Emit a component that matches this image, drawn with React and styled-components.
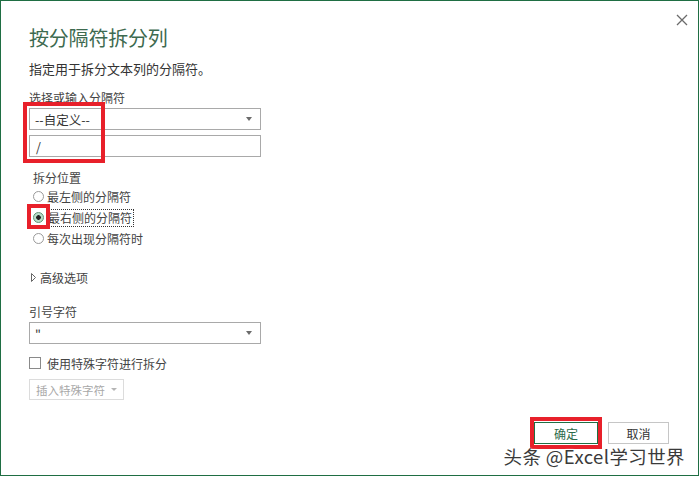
import styled, { createGlobalStyle } from "styled-components";

const Global = createGlobalStyle`
html, body {
    margin: 0;
    padding: 0;
    background: #ffffff;
}
body {
    font-family: "Noto Sans CJK SC", "Noto Sans", sans-serif;
    color: #444444;
}
`

export default function App() {
    return (
        <>
            <Global />
            <Janela>
                <Fechar>
                    <svg width="12" height="12" viewBox="0 0 12 12">
                        <path d="M1 1 L11 11 M11 1 L1 11" stroke="#6b6b6b" strokeWidth="1.3" />
                    </svg>
                </Fechar>
                <Titulo>按分隔符拆分列</Titulo>
                <Subtitulo>指定用于拆分文本列的分隔符。</Subtitulo>
                <Rotulo top={13}>选择或输入分隔符</Rotulo>
                <Marcado>
                    <Caixa>
                        <span>--自定义--</span>
                        <Seta />
                    </Caixa>
                    <Entrada>/</Entrada>
                    <Destaque style={{ left: -6, top: -6, width: 82, height: 61 }} />
                </Marcado>
                <Grupo>
                    <Rotulo top={13}>拆分位置</Rotulo>
                    <Opcao>
                        <Radio />
                        <span>最左侧的分隔符</span>
                    </Opcao>
                    <Opcao>
                        <Radio checked />
                        <Foco>最右侧的分隔符</Foco>
                        <Destaque style={{ left: -6, top: -3, width: 23, height: 25 }} />
                    </Opcao>
                    <Opcao>
                        <Radio />
                        <span>每次出现分隔符时</span>
                    </Opcao>
                </Grupo>
                <Avancado>
                    <svg width="5" height="9" viewBox="0 0 5 9">
                        <path d="M0.5 0.5 L4.5 4.5 L0.5 8.5 Z" fill="none" stroke="#666" strokeWidth="1" />
                    </svg>
                    <span>高级选项</span>
                </Avancado>
                <Rotulo top={19}>引号字符</Rotulo>
                <Caixa top={2}>
                    <span>"</span>
                    <Seta />
                </Caixa>
                <Checagem>
                    <Quadrado />
                    <span>使用特殊字符进行拆分</span>
                </Checagem>
                <Inserir>
                    插入特殊字符
                    <SetaPequena />
                </Inserir>
                <Rodape>
                    <Botao primario>
                        确定
                        <Destaque style={{ left: -5, top: -6, width: 72, height: 32 }} />
                    </Botao>
                    <Botao>取消</Botao>
                </Rodape>
                <Marca>头条 @Excel学习世界</Marca>
            </Janela>
        </>
    );
}

const Janela = styled.div`
position: relative;
width: 699px;
height: 476px;
box-sizing: border-box;
border: 1px solid #1f6e43;
padding: 25px 0 0 28px;
display: flex;
flex-direction: column;
align-items: flex-start;
`
const Fechar = styled.div`
position: absolute;
top: 6px;
right: 10px;
width: 12px;
height: 12px;
`
const Titulo = styled.div`
font-size: 20px;
line-height: 24px;
color: #3d6a4f;
letter-spacing: -0.2px;
`
const Subtitulo = styled.div`
margin-top: 11px;
font-size: 13px;
line-height: 16px;
color: #333333;
`
const Rotulo = styled.div`
margin-top: ${props => props.top}px;
font-size: 12px;
line-height: 16px;
color: #444444;
`
const Marcado = styled.div`
position: relative;
margin-top: 2px;
display: flex;
flex-direction: column;
gap: 5px;
`
const Caixa = styled.div`
width: 232px;
height: 22px;
margin-top: ${props => props.top || 0}px;
box-sizing: border-box;
border: 1px solid #a9a9a9;
padding: 0 8px 0 5px;
display: flex;
align-items: center;
justify-content: space-between;
font-size: 12.5px;
color: #333333;
background: #ffffff;
`
const Entrada = styled.div`
width: 232px;
height: 22px;
box-sizing: border-box;
border: 1px solid #a9a9a9;
padding: 0 6px;
display: flex;
align-items: center;
font-size: 12.5px;
color: #333333;
`
const Seta = styled.span`
width: 0;
height: 0;
border-left: 3.5px solid transparent;
border-right: 3.5px solid transparent;
border-top: 4px solid #6b6b6b;
`
const Destaque = styled.div`
position: absolute;
box-sizing: border-box;
border: 4px solid #e8202a;
pointer-events: none;
`
const Grupo = styled.div`
padding-left: 4px;
display: flex;
flex-direction: column;
`
const Opcao = styled.div`
position: relative;
height: 21px;
display: flex;
align-items: center;
gap: 3px;
font-size: 12px;
color: #444444;
`
const Radio = styled.span`
width: 11px;
height: 11px;
box-sizing: border-box;
border-radius: 50%;
border: 1px solid ${props => props.checked ? "#5f8f74" : "#9a9a9a"};
background: ${props => props.checked ? "radial-gradient(circle, #222 0 2px, #b8dcc8 2.6px)" : "#ffffff"};
`
const Foco = styled.span`
outline: 1px dotted #333333;
padding: 0 1px;
line-height: 16px;
`
const Avancado = styled.div`
margin-top: 20px;
margin-left: 2px;
height: 16px;
display: flex;
align-items: center;
gap: 4px;
font-size: 12px;
color: #444444;
`
const Checagem = styled.div`
margin-top: 11px;
height: 16px;
display: flex;
align-items: center;
gap: 6px;
font-size: 12px;
color: #444444;
`
const Quadrado = styled.span`
width: 12px;
height: 12px;
box-sizing: border-box;
border: 1px solid #8a8a8a;
background: #ffffff;
`
const Inserir = styled.div`
margin-top: 8px;
width: 95px;
height: 21px;
box-sizing: border-box;
border: 1px solid #dcdcdc;
display: flex;
align-items: center;
justify-content: center;
gap: 6px;
font-size: 11.5px;
color: #a8a8a8;
`
const SetaPequena = styled.span`
width: 0;
height: 0;
border-left: 3px solid transparent;
border-right: 3px solid transparent;
border-top: 3px solid #b5b5b5;
`
const Rodape = styled.div`
margin-top: auto;
align-self: stretch;
padding: 0 29px 31px 0;
display: flex;
justify-content: flex-end;
gap: 10px;
`
const Botao = styled.div`
position: relative;
width: ${props => props.primario ? 64 : 61}px;
height: 22px;
box-sizing: border-box;
border: 1px solid ${props => props.primario ? "#1f6e43" : "#c6c6c6"};
display: flex;
align-items: center;
justify-content: center;
font-size: 12px;
color: ${props => props.primario ? "#2c6a4a" : "#333333"};
background: #ffffff;
`
const Marca = styled.div`
position: absolute;
right: 13px;
bottom: 8px;
font-family: "Noto Sans CJK SC", "Liberation Sans", sans-serif;
font-size: 18.5px;
line-height: 22px;
letter-spacing: 0.4px;
color: #3a3a3a;
text-shadow: 0 0 2px #fff, 0 0 2px #fff, 1px 1px 1px #fff;
`
